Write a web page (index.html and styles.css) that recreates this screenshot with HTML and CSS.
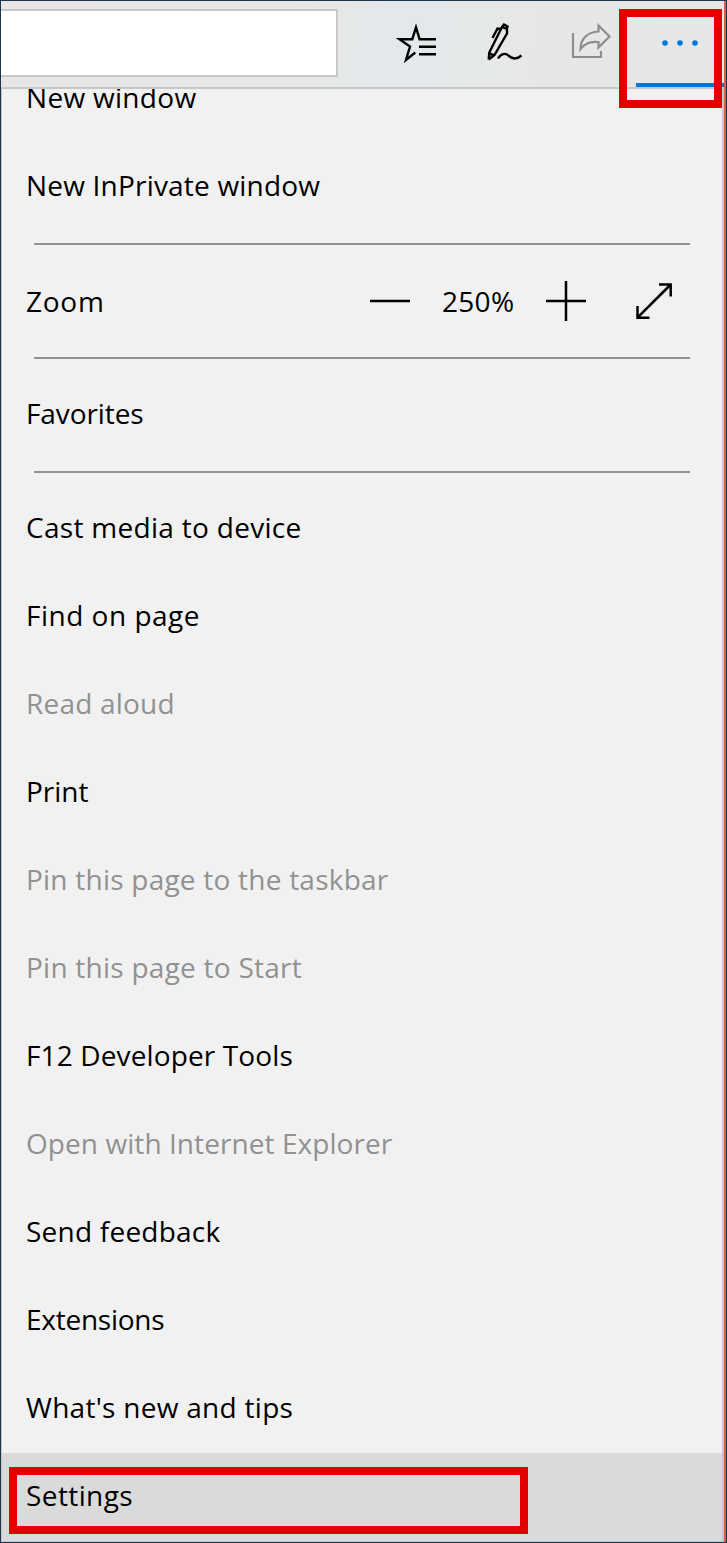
FILE: index.html
```html
<!DOCTYPE html>
<html lang="en">
<head>
<meta charset="utf-8">
<title>Browser menu</title>
<link rel="stylesheet" href="styles.css">
</head>
<body>
<div class="window">
  <header class="toolbar">
    <div class="address"></div>
    <svg class="icons" viewBox="338 1 386 86" fill="none" stroke="#000" stroke-width="2.400">
      <path d="M436 39.2H419.6L416 27.3L412.3 39.2H399.5L410 46.5L406 60L415.3 52.5M419 46.8H436M419 54.3H436"/>
      <path d="M488.700 59.500L489.300 52.500L502 27L507 29V33.500L494.500 55L488.700 59.500M489 53.500L494.500 55.500M502 27L504 24.500L507.500 26.500L506.500 29.500M501.500 29L497.500 28.500L492.500 38M498 58.500C501 53.500 505.500 52.500 509 56C513.500 60 518 58.500 521.500 55.500"/>
      <g stroke="#8e8e8e" stroke-width="2.200">
        <path d="M573 33V57H601V51"/>
        <path d="M598.500 25.500L609.500 36.500L598.500 47.500V42C590 41 584.500 43.500 580.500 49C580.500 40 586.500 32 598.500 31.500Z"/>
      </g>
      <g fill="#0078d7" stroke="none"><circle cx="665" cy="43" r="2.800"/><circle cx="680" cy="43" r="2.800"/><circle cx="695" cy="43" r="2.800"/></g>
    </svg>
    <div class="active-line"></div>
  </header>
  <nav class="menu">
    <div class="item first"><span class="new-window">New window</span></div>
    <div class="item"><span class="inprivate">New InPrivate window</span></div>
    <hr class="rule">
    <div class="item zoom"><span class="zoom-label">Zoom</span>
      <svg class="glyph" viewBox="0 0 40 40"><path d="M0 20H40"/></svg>
      <span class="percent">250%</span>
      <svg class="glyph" viewBox="0 0 40 40"><path d="M0 20H40M20 0V40"/></svg>
      <svg class="glyph full" viewBox="0 0 40 40"><path d="M3.5 36.700L36.700 3.500M25 3.500H36.700V15.500M3.500 25V36.700H15.500"/></svg>
    </div>
    <hr class="rule">
    <div class="item"><span class="favorites">Favorites</span></div>
    <hr class="rule">
    <div class="item"><span class="cast">Cast media to device</span></div>
    <div class="item"><span class="find">Find on page</span></div>
    <div class="item disabled"><span class="read">Read aloud</span></div>
    <div class="item"><span>Print</span></div>
    <div class="item disabled"><span class="pin-taskbar">Pin this page to the taskbar</span></div>
    <div class="item disabled"><span class="pin-start">Pin this page to Start</span></div>
    <div class="item"><span class="devtools">F12 Developer Tools</span></div>
    <div class="item disabled"><span class="open-ie">Open with Internet Explorer</span></div>
    <div class="item"><span class="feedback">Send feedback</span></div>
    <div class="item"><span class="extensions">Extensions</span></div>
    <div class="item"><span class="tips">What's new and tips</span></div>
    <div class="item selected"><span class="settings">Settings</span></div>
  </nav>
  <div class="highlight highlight-more"></div>
  <div class="highlight highlight-settings"></div>
</div>
</body>
</html>
```
FILE: styles.css
```css
* { box-sizing: border-box; }
body { margin: 0; }
.window {
  position: relative;
  display: flex;
  flex-direction: column;
  width: 727px;
  height: 1543px;
  overflow: hidden;
  border: 1px solid #1b334d;
  background: linear-gradient(#dd5c4b, #dd5c4b) right / 2px 100% no-repeat #f1f1f1;
  font-family: "Open Sans", "Noto Sans", sans-serif;
  font-size: 28px;
  color: #000;
}
.toolbar {
  position: relative;
  display: flex;
  flex: none;
  width: 723px;
  height: 88px;
  border-bottom: 2px solid #c8c8c8;
  background: linear-gradient(100deg, #e8e6e4, #e5e8ea 55%, #e6e6e5);
}
.address {
  width: 337px;
  height: 68px;
  margin-top: 8px;
  border: 2px solid #c8c8c8;
  border-left: 0;
  background: #fff;
}
.icons { width: 386px; height: 86px; }
.active-line {
  position: absolute;
  right: 0;
  bottom: 0;
  width: 88px;
  height: 4px;
  background: #0078d7;
}
.menu {
  flex: 1;
  width: 723px;
  overflow: hidden;
  border: solid #c8c8c8;
  border-width: 0 2px 1px 1px;
  background: #f1f1f1;
}
.item {
  display: flex;
  align-items: center;
  height: 88px;
  padding: 0 0 4px 24px;
  line-height: 40px;
  white-space: pre;
}
.first { margin-top: -34px; }
.zoom { padding-bottom: 0; }
.rule {
  height: 2px;
  margin: 12px 32px;
  border: 0;
  background: #919191;
}
.disabled { color: #919191; }
.selected { background: #dadada; }
.glyph {
  width: 40px;
  height: 40px;
  fill: none;
  stroke: #000;
  stroke-width: 2.500;
}
.full { margin-left: 48px; }
.zoom-label { width: 344px; letter-spacing: 0.75px; }
.percent { width: 72px; margin: 0 32px; letter-spacing: 0.3px; }

/* Per-label tracking */
.new-window { letter-spacing: 0.3px; }
.inprivate { letter-spacing: 0.2px; }
.favorites { letter-spacing: -0.1px; }
.cast { letter-spacing: 0.3px; }
.find { letter-spacing: 0.5px; }
.read { letter-spacing: 0.2px; }
.pin-taskbar { letter-spacing: 0.23px; }
.pin-start { letter-spacing: 0.25px; }
.devtools { letter-spacing: 0.13px; }
.open-ie { letter-spacing: 0.07px; }
.feedback { letter-spacing: 0.23px; }
.extensions { letter-spacing: -0.25px; }
.tips { letter-spacing: 0.28px; }
.settings { letter-spacing: 0.4px; }

.highlight { position: absolute; border: 8px solid #e20000; }
.highlight-more { left: 618px; top: 8px; width: 103px; height: 99px; }
.highlight-settings { left: 8px; top: 1466px; width: 519px; height: 67px; }
```
